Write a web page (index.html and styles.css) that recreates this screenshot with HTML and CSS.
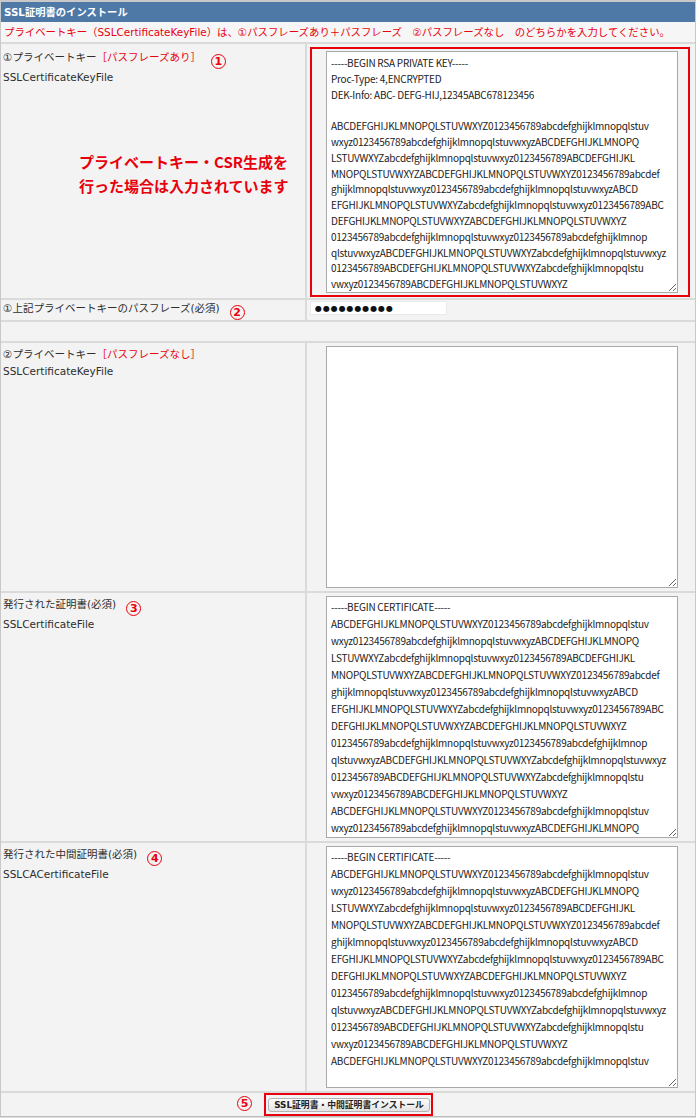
FILE: index.html
```html
<!DOCTYPE html>
<html lang="ja">
<head>
    <meta charset="UTF-8">
    <meta name="viewport" content="width=device-width, initial-scale=1.0">
    <title>SSL証明書のインストール</title>
    <link rel="stylesheet" href="styles.css">
</head>
<body>
    <div class="panel">
        <div class="panel-head">SSL証明書のインストール</div>
        <p class="notice">プライベートキー（SSLCertificateKeyFile）は、①パスフレーズあり＋パスフレーズ　②パスフレーズなし　のどちらかを入力してください。</p>

        <!-- 1: key with passphrase -->
        <div class="row row-key">
            <div class="label">
                <div>①プライベートキー<span class="red">［パスフレーズあり］</span><span class="num">1</span></div>
                <div>SSLCertificateKeyFile</div>
                <p class="callout">プライベートキー・CSR生成を<br>行った場合は入力されています</p>
            </div>
            <div class="field">
                <div class="mark">
                    <textarea class="key" wrap="off">-----BEGIN RSA PRIVATE KEY-----
Proc-Type: 4,ENCRYPTED
DEK-Info: ABC- DEFG-HIJ,12345ABC678123456

ABCDEFGHIJKLMNOPQLSTUVWXYZ0123456789abcdefghijklmnopqlstuv
wxyz0123456789abcdefghijklmnopqlstuvwxyzABCDEFGHIJKLMNOPQ
LSTUVWXYZabcdefghijklmnopqlstuvwxyz0123456789ABCDEFGHIJKL
MNOPQLSTUVWXYZABCDEFGHIJKLMNOPQLSTUVWXYZ0123456789abcdef
ghijklmnopqlstuvwxyz0123456789abcdefghijklmnopqlstuvwxyzABCD
EFGHIJKLMNOPQLSTUVWXYZabcdefghijklmnopqlstuvwxyz0123456789ABC
DEFGHIJKLMNOPQLSTUVWXYZABCDEFGHIJKLMNOPQLSTUVWXYZ
0123456789abcdefghijklmnopqlstuvwxyz0123456789abcdefghijklmnop
qlstuvwxyzABCDEFGHIJKLMNOPQLSTUVWXYZabcdefghijklmnopqlstuvwxyz
0123456789ABCDEFGHIJKLMNOPQLSTUVWXYZabcdefghijklmnopqlstu
vwxyz0123456789ABCDEFGHIJKLMNOPQLSTUVWXYZ</textarea>
                </div>
            </div>
        </div>

        <!-- passphrase -->
        <div class="row row-pass">
            <div class="label">①上記プライベートキーのパスフレーズ(必須)<span class="num">2</span></div>
            <div class="field">
                <input type="text" class="pass" value="●●●●●●●●●●" readonly>
            </div>
        </div>

        <div class="row row-blank">
            <div class="blank"></div>
        </div>

        <!-- 2: key without passphrase -->
        <div class="row">
            <div class="label">
                <div>②プライベートキー<span class="red">［パスフレーズなし］</span></div>
                <div>SSLCertificateKeyFile</div>
            </div>
            <div class="field">
                <textarea class="cert" wrap="off"></textarea>
            </div>
        </div>

        <!-- certificate -->
        <div class="row">
            <div class="label">
                <div>発行された証明書(必須)<span class="num">3</span></div>
                <div>SSLCertificateFile</div>
            </div>
            <div class="field">
                <textarea class="cert" wrap="off">-----BEGIN CERTIFICATE-----
ABCDEFGHIJKLMNOPQLSTUVWXYZ0123456789abcdefghijklmnopqlstuv
wxyz0123456789abcdefghijklmnopqlstuvwxyzABCDEFGHIJKLMNOPQ
LSTUVWXYZabcdefghijklmnopqlstuvwxyz0123456789ABCDEFGHIJKL
MNOPQLSTUVWXYZABCDEFGHIJKLMNOPQLSTUVWXYZ0123456789abcdef
ghijklmnopqlstuvwxyz0123456789abcdefghijklmnopqlstuvwxyzABCD
EFGHIJKLMNOPQLSTUVWXYZabcdefghijklmnopqlstuvwxyz0123456789ABC
DEFGHIJKLMNOPQLSTUVWXYZABCDEFGHIJKLMNOPQLSTUVWXYZ
0123456789abcdefghijklmnopqlstuvwxyz0123456789abcdefghijklmnop
qlstuvwxyzABCDEFGHIJKLMNOPQLSTUVWXYZabcdefghijklmnopqlstuvwxyz
0123456789ABCDEFGHIJKLMNOPQLSTUVWXYZabcdefghijklmnopqlstu
vwxyz0123456789ABCDEFGHIJKLMNOPQLSTUVWXYZ
ABCDEFGHIJKLMNOPQLSTUVWXYZ0123456789abcdefghijklmnopqlstuv
wxyz0123456789abcdefghijklmnopqlstuvwxyzABCDEFGHIJKLMNOPQ
LSTUVWXYZabcdefghijklmnopqlstuvwxyz0123456789ABCDEFGHIJKL
-----END CERTIFICATE-----</textarea>
            </div>
        </div>

        <!-- intermediate certificate -->
        <div class="row">
            <div class="label">
                <div>発行された中間証明書(必須)<span class="num">4</span></div>
                <div>SSLCACertificateFile</div>
            </div>
            <div class="field">
                <textarea class="cert" wrap="off">-----BEGIN CERTIFICATE-----
ABCDEFGHIJKLMNOPQLSTUVWXYZ0123456789abcdefghijklmnopqlstuv
wxyz0123456789abcdefghijklmnopqlstuvwxyzABCDEFGHIJKLMNOPQ
LSTUVWXYZabcdefghijklmnopqlstuvwxyz0123456789ABCDEFGHIJKL
MNOPQLSTUVWXYZABCDEFGHIJKLMNOPQLSTUVWXYZ0123456789abcdef
ghijklmnopqlstuvwxyz0123456789abcdefghijklmnopqlstuvwxyzABCD
EFGHIJKLMNOPQLSTUVWXYZabcdefghijklmnopqlstuvwxyz0123456789ABC
DEFGHIJKLMNOPQLSTUVWXYZABCDEFGHIJKLMNOPQLSTUVWXYZ
0123456789abcdefghijklmnopqlstuvwxyz0123456789abcdefghijklmnop
qlstuvwxyzABCDEFGHIJKLMNOPQLSTUVWXYZabcdefghijklmnopqlstuvwxyz
0123456789ABCDEFGHIJKLMNOPQLSTUVWXYZabcdefghijklmnopqlstu
vwxyz0123456789ABCDEFGHIJKLMNOPQLSTUVWXYZ
ABCDEFGHIJKLMNOPQLSTUVWXYZ0123456789abcdefghijklmnopqlstuv</textarea>
            </div>
        </div>

        <div class="actions">
            <span class="btn-mark">
                <span class="num num-side">5</span>
                <button type="button">SSL証明書・中間証明書インストール</button>
            </span>
        </div>
    </div>
</body>
</html>
```

FILE: styles.css
```css
body {
    margin: 0;
    background: #dcdcdc;
    font-family: "DejaVu Sans", "Noto Sans CJK JP", sans-serif;
    font-size: 10.5px;
    color: #2e2e2e;
}
.panel {
    background: #f3f3f3;
    border-left: 1px solid #c8c8c8;
    border-right: 1px solid #c8c8c8;
    border-bottom: 1px solid #bdbdbd;
}
.panel-head {
    background: #4e79a7;
    border-top: 2px solid #c8c8c8;
    color: #fff;
    font-weight: bold;
    font-size: 10.3px;
    height: 20px;
    line-height: 20px;
    padding-left: 3px;
}
.notice {
    margin: 0;
    height: 20px;
    line-height: 20px;
    padding-left: 3px;
    color: #e8000d;
    font-size: 10.4px;
    background: #f6f6f6;
    border-bottom: 2px solid #dadada;
}
.red {
    color: #e8000d;
}
.row {
    display: grid;
    grid-template-columns: 306px 1fr;
    border-bottom: 2px solid #dadada;
}
.label {
    padding: 3px 2px 0;
    line-height: 17px;
    border-right: 2px solid #dadada;
}
.row-key .label {
    padding-top: 5px;
}
.callout {
    margin: 64px 0 0 76px;
    color: #e8000d;
    font-family: "Noto Sans CJK JP", sans-serif;
    font-weight: bold;
    font-size: 15px;
    line-height: 24px;
}
.num {
    display: inline-block;
    width: 13px;
    height: 13px;
    margin-left: 10px;
    border: 1.6px solid #e8000d;
    border-radius: 50%;
    color: #e8000d;
    font-weight: bold;
    font-size: 11px;
    line-height: 13px;
    text-align: center;
    vertical-align: -4px;
}
.field {
    display: flex;
    align-items: flex-start;
}
.mark {
    margin: 3px 4px 1px 3px;
    padding: 2px 10px 2px 14px;
    border: 2px solid #e8000d;
}
textarea {
    display: block;
    box-sizing: border-box;
    width: 352px;
    height: 242px;
    margin: 0;
    padding: 2px 2px 0 4px;
    border: 1px solid #a9a9a9;
    background: #fff;
    color: #222;
    font-family: "Noto Sans CJK JP", sans-serif;
    font-size: 10px;
    letter-spacing: -0.25px;
    overflow: hidden;
    white-space: pre;
}
textarea.key {
    line-height: 15.8px;
    padding-top: 3px;
}
textarea.cert {
    margin: 3px 0 3px 19px;
    line-height: 17px;
    padding-top: 1px;
}
.row-pass .label {
    padding-top: 0;
}
.pass {
    box-sizing: border-box;
    width: 137px;
    height: 14px;
    margin: 1px 0 3px 3px;
    padding: 0 4px;
    border: 1px solid #eaeaea;
    background: #fff;
    font-family: "DejaVu Sans", sans-serif;
    font-size: 8px;
    letter-spacing: 0.9px;
    color: #111;
}
.row-blank .blank {
    height: 19px;
}
.actions {
    display: flex;
    justify-content: center;
    padding: 0 0 0 1px;
}
.btn-mark {
    position: relative;
    display: block;
    padding: 3px 1px 2px 2px;
    border: 2px solid #e8000d;
}
.num-side {
    position: absolute;
    left: -29px;
    top: 1px;
    margin: 0;
}
button {
    display: block;
    width: 162px;
    height: 14px;
    padding: 0;
    border: 1px solid #b4b4b4;
    border-radius: 3px;
    background: linear-gradient(#fefefe, #e4e4e4);
    color: #222;
    font-family: "DejaVu Sans", "Noto Sans CJK JP", sans-serif;
    font-size: 8.8px;
    font-weight: bold;
    line-height: 12px;
}
```
